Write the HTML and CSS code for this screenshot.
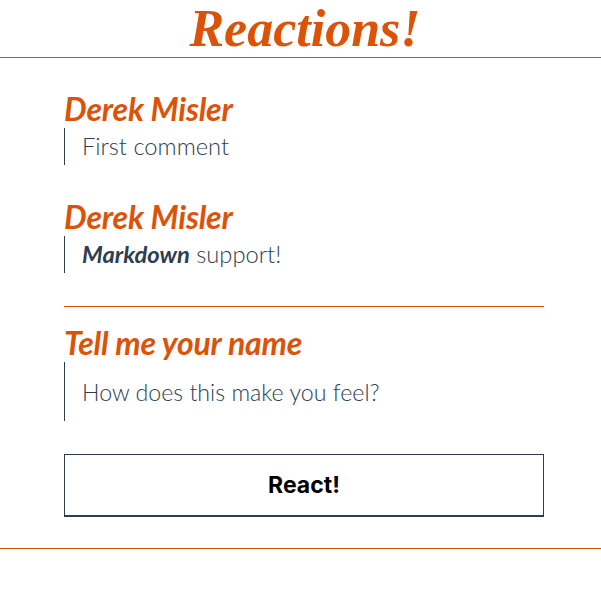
FILE: index.html
```html
<!DOCTYPE html>
<html>
<head>
<meta charset="utf-8">
<link rel="stylesheet" href="styles.css">
</head>
<body>
<header class="top">
  <h1 class="title">Reactions!</h1>
</header>
<main class="wrap">
  <section class="comment">
    <h2 class="author">Derek Misler</h2>
    <blockquote class="body">First comment</blockquote>
  </section>
  <section class="comment">
    <h2 class="author">Derek Misler</h2>
    <blockquote class="body"><strong class="md">Markdown</strong> support!</blockquote>
  </section>
  <hr class="sep">
  <form class="form">
    <input class="name" type="text" placeholder="Tell me your name">
    <textarea class="msg" placeholder="How does this make you feel?"></textarea>
    <button class="btn" type="button">React!</button>
  </form>
</main>
<footer class="bottom"></footer>
</body>
</html>
```
FILE: styles.css
```css
html, body {
  margin: 0;
  padding: 0;
  background: #fff;
}
body {
  font-family: Lato, "Liberation Sans", sans-serif;
  color: #2c3e50;
}
.top {
  border-bottom: 1px solid #d35400;
  height: 57px;
  display: flex;
  justify-content: center;
  padding-left: 9px;
}
.title {
  margin: 0;
  font-family: "Liberation Serif", "DejaVu Serif", serif;
  font-style: italic;
  font-weight: 700;
  font-size: 52px;
  line-height: 57px;
  color: #dc5308;
}
.wrap {
  width: 480px;
  margin-left: 64px;
  padding-top: 32px;
}
.comment {
  margin-bottom: 33px;
}
.author {
  margin: 0;
  font-style: italic;
  font-weight: 700;
  font-size: 32px;
  line-height: 38px;
  color: #dc5308;
  letter-spacing: -0.2px;
}
.body {
  margin: 0;
  border-left: 1px solid #2c3e50;
  padding-left: 17px;
  font-weight: 300;
  font-size: 23.7px;
  line-height: 37px;
}
.md {
  font-weight: 700;
  font-style: italic;
}
.sep {
  border: 0;
  border-top: 1px solid #d35400;
  margin: 0;
}
.form {
  display: flex;
  flex-direction: column;
  padding-top: 17px;
}
.name {
  border: 0;
  padding: 0;
  margin: 0;
  font-family: Lato, sans-serif;
  font-style: italic;
  font-weight: 700;
  font-size: 32px;
  line-height: 38px;
  height: 38px;
  color: #dc5308;
  outline: none;
  letter-spacing: -0.2px;
}
.name::placeholder {
  color: #dc5308;
  opacity: 1;
}
.msg {
  margin: 0;
  border: 0;
  border-left: 1px solid #2c3e50;
  padding: 15px 0 0 17px;
  height: 59px;
  box-sizing: border-box;
  resize: none;
  font-family: Lato, sans-serif;
  font-weight: 300;
  font-size: 23.2px;
  line-height: 30px;
  color: #2c3e50;
  outline: none;
  overflow: hidden;
}
.msg::placeholder {
  color: #2c3e50;
  opacity: 1;
}
.btn {
  margin-top: 33px;
  height: 62px;
  background: #fff;
  border: 1px solid #2c3e50;
  box-shadow: 0 1px 0 #2c3e50;
  font-family: Inter, "Liberation Sans", sans-serif;
  font-weight: 700;
  font-size: 23px;
  color: #000;
  padding: 0;
}
.bottom {
  margin-top: 32px;
  border-top: 1px solid #d35400;
}
```
